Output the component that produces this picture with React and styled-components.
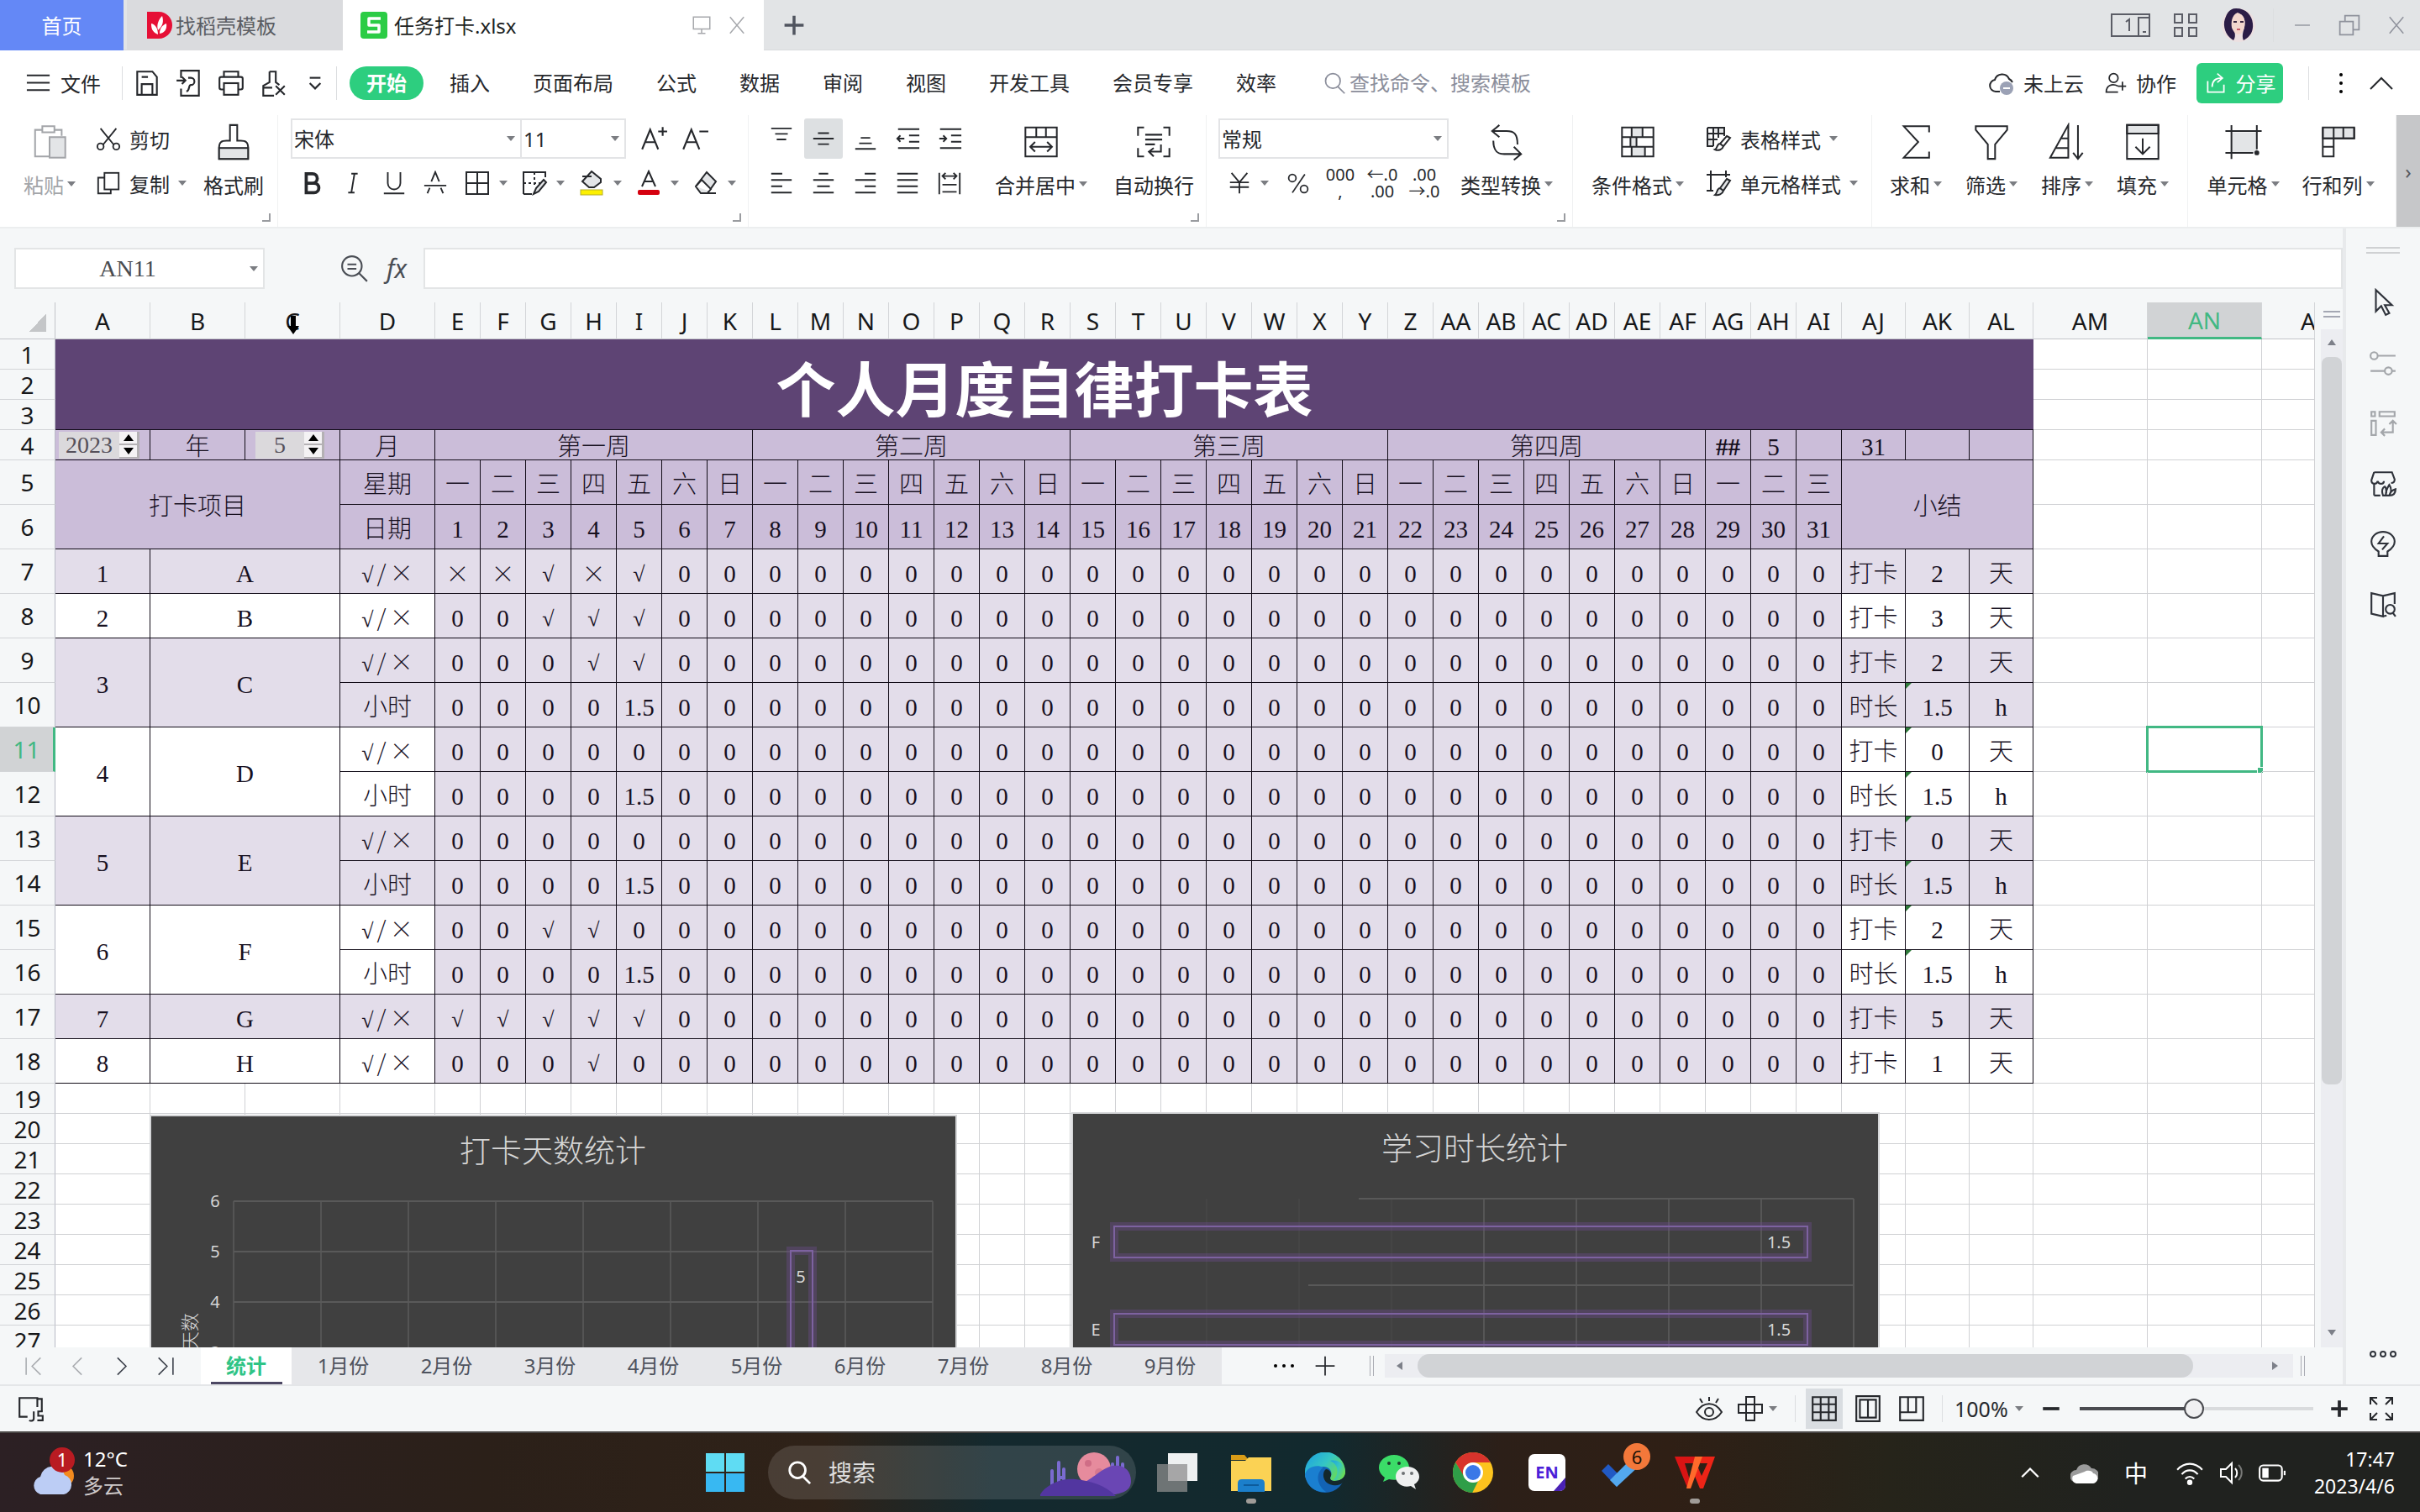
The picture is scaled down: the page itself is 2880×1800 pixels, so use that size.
import React from 'react';
import styled, { createGlobalStyle, css } from 'styled-components';

const UI_FONT = `"Noto Sans", "Noto Sans CJK SC", sans-serif`;
const CELL_FONT = `"Liberation Serif", "Noto Sans CJK SC", serif`;
const CJK_FONT = `"Noto Sans CJK SC", sans-serif`;

const GlobalStyle = createGlobalStyle`
  * {
    box-sizing: border-box;
  }
  body {
    margin: 0;
    font-family: ${UI_FONT};
    font-size: 24px;
    color: #26282c;
    background-color: #f5f7f8;
  }
  button, input, select {
    font: inherit;
    color: inherit;
    margin: 0;
    padding: 0;
    border: 0;
    background: none;
    outline: none;
  }
`;

/* ---------- icons ---------- */

const shade = { fill: '#e3e5e7' };

const ICONS = {
  save: <><path d="M5 3h17l5 6v20H5z" /><path d="M10 29V17h12v12M10 9h7" /></>,
  exportFile: <><path d="M7 10V2h20v28H7v-8" /><path d="M2 13h9M8 9l4 4-4 4" /><path d="M15 10h3a4 4 0 0 1 0 8c-3 0-1 7-5 7" /></>,
  print: <><path d="M8 9V3h16v6" /><rect x="3" y="9" width="26" height="14" rx="2" /><rect x="8" y="16" width="16" height="13" fill="#fff" /></>,
  preview: <><path d="M12 3h7v12l4 3M12 3v12l-7 4v11h12" /><path d="M19 19l10 10M29 19L19 29M5 21h10" /></>,
  more: <><path d="M10 10h12" /><path d="M10 16l6 6 6-6" /></>,
  menu: <path d="M2 7h28M2 16h28M2 25h28" />,
  search: <><circle cx="14" cy="13" r="10" /><path d="M21 21l9 9" /></>,
  cloud: <><path d="M14 26H9a7 7 0 0 1-1-13.900A9 9 0 0 1 25 11c2 1 3 2 4 4" /><circle cx="22" cy="22" r="8" fill="#9ba1b5" stroke="none" /><path d="M18 22h8" stroke="#fff" /></>,
  collab: <><circle cx="13" cy="9" r="6" /><path d="M19 20c-8-4-16-1-16 8h16M25 14v12M19 20h11" /></>,
  share: <><path d="M5 13v15h22V18" /><path d="M11 21c0-8 4-12 13-12M18 3l7 6-7 6" /></>,
  paste: <><path d="M10 6H4v22h12M20 6h6v5" /><path d="M10 3h10v5H10z" /><rect x="16" y="12" width="13" height="17" {...shade} /></>,
  cut: <><path d="M6 3l17 21M26 3L9 24" /><circle cx="6" cy="26" r="4" /><circle cx="26" cy="26" r="4" /></>,
  copy: <><path d="M11 9H3v20h16v-5" /><rect x="11" y="3" width="18" height="21" /></>,
  brush: <><path d="M13 2h6v13h3c4 0 6 1 6 6v9H4v-9c0-5 2-6 6-6h3z" /><rect x="4" y="21" width="24" height="9" {...shade} /></>,
  fontUp: <><path d="M3 28L12 6l9 22M6 20h12M26 3v10M21 8h10" /></>,
  fontDown: <><path d="M3 28L12 6l9 22M6 20h12M21 8h10" /></>,
  bold: <path strokeWidth="4" d="M9 4h8a6 6 0 0 1 0 12H9zM9 16h10a6 6 0 0 1 0 12H9z" />,
  italic: <path d="M14 4h8M10 28h8M18 4l-4 24" />,
  underline: <path d="M8 2v14a8 8 0 0 0 16 0V2M3 29h26" />,
  strike: <path d="M2 19h28M11 14l5-12 5 12M9 22l-3 7M23 22l3 7" />,
  border: <path d="M3 3h26v26H3zM3 16h26M16 3v26" />,
  cellStyle: <><path d="M3 29V3h26v6M3 29h10" /><path strokeDasharray="3 3" d="M3 16h20M16 3v18" /><path d="M15 29l3-7 9-10 3 3-9 11z" {...shade} /></>,
  fill: <><path d="M16 2L27 11v4l-8 6h-6l-8-7z" {...shade} /><path d="M5 8h11" /><rect x="3" y="24" width="26" height="6" fill="#fdf000" stroke="#b4ad2a" strokeWidth="1" /></>,
  fontColor: <><path d="M8 20l8-18 8 18M10 14h12" /><rect x="3" y="24" width="26" height="6" rx="2" fill="#d5000f" stroke="none" /></>,
  eraser: <><path d="M17 3l11 11-10 14h-8L4 20z" {...shade} /><path d="M4 20l7-8 11 11-4 5h9M10 28h18" fill="#fff" /></>,
  alignTop: <path d="M3 3h26M8 10h16M10 17h12" />,
  alignMid: <path d="M3 16h26M9 9h14M9 23h14" />,
  alignBottom: <path d="M3 29h26M10 15h12M8 22h16" />,
  outdent: <path d="M4 4h27M18 12h13M18 20h13M4 28h27M3 16h9M7 12l-4 4 4 4" />,
  indent: <path d="M4 4h27M18 12h13M18 20h13M4 28h27M3 16h9M8 12l4 4-4 4" />,
  left: <path d="M3 4h14M3 12h26M3 20h14M3 28h26" />,
  center: <path d="M10 4h12M3 12h26M8 20h16M3 28h26" />,
  right: <path d="M15 4h14M3 12h26M15 20h14M3 28h26" />,
  justify: <path d="M3 4h26M3 12h26M3 20h26M3 28h26" />,
  distribute: <path d="M3 3v27M29 3v27M7 7h18M11 3L7 7l4 4M21 3l4 4-4 4M7 18h18M7 27h18" />,
  merge: <><path d="M3 4h26v24H3zM3 12h26M12 4v8M20 4v8" /><path d="M8 20h16M11 16l-4 4 4 4M21 16l4 4-4 4" /></>,
  wrap: <><path d="M8 4H3v7M24 4h5v7M8 28H3v-7M24 28h5v-7" /><path d="M9 10h14M9 14h14M9 18h8M22 18v6h-9M16 21l-4 3 4 4" /></>,
  yen: <path d="M6 3l10 12L26 3M4 15h24M4 21h24M16 15v14" />,
  percent: <><circle cx="8" cy="9" r="5" /><circle cx="24" cy="24" r="5" /><path d="M25 4L8 29" /></>,
  convert: <><path d="M10 2L4 7l6 5M4 7h12c6 0 9 2 9 11" /><path d="M22 20l6 6-6 5M28 26H14c-6 0-9-3-9-11" /></>,
  condFormat: <><path d="M11 4h9v8h-9zM10 12h5v8h-5zM11 20h11v8H11z" {...shade} stroke="none" /><path d="M3 4h26v24H3zM3 12h26M3 20h26M11 4v8M20 4v8M10 12v8M15 12v8M11 20v8M22 20v8" /></>,
  tableStyle: <><path d="M3 3h20v10M3 3v22h7M3 10h20M3 17h12M10 3v22M16 3v12" {...shade} /><path d="M26 13l4 2-8 10-4-3zM18 22c-4 0-3 6-6 7 4 2 9 0 10-4" fill="#fff" /></>,
  cellFormat: <><path d="M7 1v24M2 6h28M25 1v8M2 25h8" /><path d="M26 11l4 2-8 12-4-3zM18 22c-4 0-3 6-6 8 4 1 9-1 10-5" {...shade} /></>,
  sum: <path d="M27 8V3H6l12 13L6 29h21v-5" />,
  filter: <path d="M3 3h26v3L19 18v12h-6V18L3 6z" />,
  sort: <path d="M17 2v27H2zM17 13h-6M17 21H7M25 2v27M21 25l4 5 4-5" />,
  fillDown: <><path d="M3 2h26v7H3z" {...shade} /><path d="M3 2h26v28H3zM16 13v12M10 20l6 6 6-6" /></>,
  cell: <><rect x="6" y="8" width="21" height="17" {...shade} stroke="none" /><path d="M6 2v28M1 7h30M1 25h23M27 2v20" /><circle cx="27" cy="25" r="2" fill="currentColor" stroke="none" /></>,
  rowCol: <><path d="M3 4h26v9H3z" {...shade} /><path d="M3 4v24h9V4M3 13h26V4M3 20h9M20 4v9" /></>,
  lookup: <><circle cx="13" cy="13" r="11" /><path d="M21 21l9 9M8 11h10M8 16h10" /></>,
  screen: <path d="M3 3h26v19H3zM16 22v7M10 29h12" />,
  close: <path d="M5 3l22 26M27 3L5 29" />,
  plus: <path d="M16 3v26M3 16h26" />,
  minus: <path d="M3 16h26" />,
  apps: <path d="M3 3h9v10H3zM20 3h9v10h-9zM3 19h9v10H3zM20 19h9v10h-9z" />,
  restore: <path d="M3 11h18v18H3zM10 11V3h19v19h-8" />,
  chevronUp: <path d="M3 23l13-13 13 13" />,
  chevronLeft: <path d="M22 3L9 16l13 13" />,
  chevronRight: <path d="M10 3l13 13-13 13" />,
  first: <path d="M4 3v26M26 3L13 16l13 13" />,
  last: <path d="M28 3v26M6 3l13 13L6 29" />,
  pointer: <path d="M8 2v24l6-6 5 10 4-2-5-9h8z" />,
  sliders: <><circle cx="6" cy="8" r="4" /><path d="M10 8h20M2 25h16M26 25h4" /><circle cx="22" cy="25" r="4" /></>,
  swap: <path d="M3 3h4v5H3zM12 3h17v5H12zM3 13h5v16H3zM27 13v13H14M23 17l4-4 4 4M18 22l-4 4 4 4" />,
  shop: <><path d="M6 29V16M6 3h20l3 8c0 3-2 4-4 4M6 3l-3 9c0 5 6 5 7 1 1 4 7 4 7 0M6 29h7" /><path d="M16 29c-3-8 2-10 2-10s3 3 1 10c0-6 2-9 4-12 3 4 2 9 0 12 1-4 3-6 7-7 0 5-3 7-7 7z" /></>,
  bulb: <><path d="M11 29h10v-5c5-3 8-6 8-11a13 11 0 0 0-26 0c0 5 3 8 8 11z" /><path d="M17 7l-6 8h10l-6 7" /></>,
  book: <><path d="M16 6L3 3v23l13 3zM16 6l13-3v12M16 29l4-1" /><circle cx="24" cy="21" r="5" /><path d="M27 25l3 4" /></>,
  dots: <><circle cx="4" cy="16" r="3" /><circle cx="16" cy="16" r="3" /><circle cx="28" cy="16" r="3" /></>,
  eye: <><path d="M1 20c8-13 22-13 30 0-8 12-22 12-30 0z" /><circle cx="16" cy="20" r="5" /><path d="M16 2v5M5 4l3 5M27 4l-3 5" /></>,
  cross: <path d="M11 2h10v28H11zM2 11h28v10H2z" />,
  gridView: <path d="M3 3h26v26H3zM3 11h26M3 20h26M12 3v26M21 3v26" />,
  pageView: <path d="M3 2h26v28H3zM7 6h18v20H7zM16 6v20" />,
  splitView: <path d="M3 3h26v26H3zM3 20h18V3M12 3v17" />,
  fullscreen: <path d="M3 11V3h8M3 3l8 8M29 11V3h-8M29 3l-8 8M3 21v8h8M3 29l8-8M29 21v8h-8M29 29l-8-8" />,
  macro: <><path d="M12 25H3V4h20v10M23 5h5v14" /><path d="M19 19v8c0 3-4 3-5 2M29 19h-5v5h5v5h-6" /></>,
  wifi: <><path d="M2 13c8-9 20-9 28 0M7 18c5-6 13-6 18 0M11 23c3-3 7-3 10 0" /><circle cx="16" cy="27" r="2" fill="currentColor" /></>,
  sound: <><path d="M3 12h6l7-7v23l-7-7H3zM20 11c3 3 3 8 0 11" /><path d="M24 7c5 5 5 13 0 18" opacity=".4" /></>,
  battery: <><rect x="2" y="8" width="25" height="17" rx="4" /><rect x="5" y="11" width="7" height="11" fill="currentColor" stroke="none" /><path d="M30 14v5" /></>,
};

const Svg = styled.svg`
  display: block;
  flex: none;
  fill: none;
  stroke: currentColor;
  stroke-width: ${(p) => p.$stroke || 2};
`;

const Icon = ({ name, size = 30, stroke }) => (
  <Svg $stroke={stroke} width={size} height={size} viewBox="0 0 32 32" aria-hidden="true">
    {ICONS[name]}
  </Svg>
);

const Arrow = styled.span`
  flex: none;
  width: 10px;
  height: 6px;
  border: 5px solid transparent;
  border-top: 6px solid #7b7d82;
  border-bottom: 0;
`;

const Rule = styled.span`
  flex: none;
  width: 1px;
  height: ${(p) => p.$h || 40}px;
  margin: 0 ${(p) => p.$gap || 0}px;
  background-color: #dcdee0;
`;

/* ---------- shell ---------- */

const Page = styled.div`
  height: 100vh;
  display: flex;
  flex-direction: column;
  overflow: hidden;
`;

const TitleBar = styled.header`
  flex: none;
  height: 60px;
  display: flex;
  align-items: center;
  background-color: #e2e4e6;
  border-bottom: 1px solid #d8dadc;
`;

const HomeTab = styled.button`
  width: 147px;
  height: 60px;
  color: #fff;
  background-color: #6488f6;
`;

const DocTab = styled.button`
  display: flex;
  align-items: center;
  gap: ${(p) => (p.$active ? 8 : 4)}px;
  width: ${(p) => (p.$active ? 501 : 257)}px;
  height: 60px;
  margin-left: ${(p) => (p.$active ? 0 : 4)}px;
  padding: 0 20px 0 ${(p) => (p.$active ? 21 : 24)}px;
  color: ${(p) => (p.$active ? '#1d1f22' : '#5a5d63')};
  background-color: ${(p) => (p.$active ? '#fff' : '#dadbde')};
`;

const TabIcons = styled.span`
  display: flex;
  gap: 18px;
  margin-left: auto;
  color: #a6a8ac;
`;

const TitleTools = styled.div`
  display: flex;
  align-items: center;
  margin-left: auto;
  color: #5b5d66;
`;

const TitleTool = styled.button`
  display: flex;
  justify-content: center;
  align-items: center;
  width: ${(p) => p.$w || 56}px;
  height: 60px;
  color: ${(p) => (p.$dim ? '#8f929c' : 'inherit')};
`;

const AddTab = styled(TitleTool)`
  width: 72px;
  color: #50545f;
`;

const MenuBar = styled.nav`
  flex: none;
  height: 77px;
  display: flex;
  align-items: center;
  padding: 0 30px;
  background-color: #fff;
`;

const FileButton = styled.button`
  display: flex;
  align-items: center;
  gap: 11px;
  width: 111px;
`;

const QuickButton = styled.button`
  display: flex;
  justify-content: center;
  width: 50px;
`;

const MenuItems = styled.div`
  display: flex;
  align-items: center;
  gap: 11px;
  margin-left: 15px;
`;

const MenuItem = styled.button`
  height: 40px;
  padding: 0 20px;
  line-height: 38px;
  border-radius: 20px;
  white-space: nowrap;
  ${(p) => p.$active && css`
    color: #fff;
    font-weight: 700;
    background-color: #2dce7f;
  `}
`;

const SearchBox = styled.label`
  display: flex;
  align-items: center;
  gap: 4px;
  margin-left: 35px;
  color: #8b8e9b;
  input {
    width: 260px;
  }
  input::placeholder {
    color: #8b8e9b;
    opacity: 1;
  }
`;

const MenuRight = styled.div`
  display: flex;
  align-items: center;
  gap: 24px;
  margin-left: auto;
`;

const TextButton = styled.button`
  display: flex;
  align-items: center;
  gap: 10px;
  white-space: nowrap;
`;

const ShareButton = styled(TextButton)`
  height: 48px;
  width: 103px;
  justify-content: center;
  color: #fff;
  border-radius: 6px;
  background-color: #2dce7f;
`;

/* ---------- ribbon ---------- */

const Ribbon = styled.section`
  flex: none;
  height: 135px;
  display: flex;
  background-color: #fff;
  border-bottom: 2px solid #eceeef;
`;

const Group = styled.div`
  position: relative;
  flex: ${(p) => (p.$w ? 'none' : '1')};
  width: ${(p) => (p.$w ? `${p.$w}px` : 'auto')};
  display: flex;
  padding: 4px 0 0 ${(p) => p.$pad}px;
  border-right: 1px solid #f0f1f2;
`;

const Launcher = styled.button`
  position: absolute;
  right: 8px;
  bottom: 6px;
  width: 10px;
  height: 10px;
  border-right: 2px solid #9a9ca0;
  border-bottom: 2px solid #9a9ca0;
`;

const BigButtonRoot = styled.button`
  width: ${(p) => p.$w}px;
  height: 100px;
  display: flex;
  flex-direction: column;
  align-items: center;
  color: ${(p) => (p.$muted ? '#a3a5a9' : 'inherit')};
`;

const BigIcon = styled.span`
  height: 56px;
  display: flex;
  align-items: center;
`;

const BigLabel = styled.span`
  height: 44px;
  display: flex;
  align-items: center;
  gap: 4px;
  white-space: nowrap;
`;

const BigButton = ({ icon, label, w, muted, arrow = true }) => (
  <BigButtonRoot $w={w} $muted={muted}>
    <BigIcon><Icon name={icon} size={46} stroke={1.4} /></BigIcon>
    <BigLabel>{label}{arrow && <Arrow />}</BigLabel>
  </BigButtonRoot>
);

const Stack = styled.div`
  display: flex;
  flex-direction: column;
  gap: 5px;
  width: ${(p) => (p.$w ? `${p.$w}px` : 'auto')};
  padding-left: ${(p) => p.$pad || 0}px;
`;

const Line = styled.div`
  display: flex;
  align-items: center;
  height: 48px;
  gap: ${(p) => p.$gap || 0}px;
`;

const FontPickers = styled.div`
  display: flex;
  margin-right: 8px;
`;

const LineButton = styled(TextButton)`
  height: 48px;
`;

const ToolButton = styled.button`
  display: flex;
  align-items: center;
  justify-content: ${(p) => (p.$arrow ? 'flex-start' : 'center')};
  gap: 10px;
  width: ${(p) => p.$w || 49}px;
  height: 48px;
  padding-left: ${(p) => (p.$arrow ? 10 : 0)}px;
  font-size: 20px;
  line-height: 20px;
  border-radius: 3px;
  background-color: ${(p) => (p.$active ? '#dde0e2' : 'transparent')};
`;

const SelectWrap = styled.span`
  display: flex;
  align-items: center;
  width: ${(p) => p.$w}px;
  height: 48px;
  padding: 0 6px 0 2px;
  border: 2px solid #e3e4e6;
  & + & {
    border-left: 0;
  }
  select {
    flex: 1;
    min-width: 0;
    appearance: none;
  }
`;

const Select = ({ w, label, value }) => (
  <SelectWrap $w={w}>
    <select aria-label={label} defaultValue={value}><option>{value}</option></select>
    <Arrow />
  </SelectWrap>
);

const RibbonScroll = styled.button`
  width: 28px;
  height: 133px;
  color: #55575c;
  background-color: #c6c7c9;
`;

/* ---------- formula bar ---------- */

const Main = styled.main`
  flex: 1;
  min-height: 0;
  display: flex;
`;

const Work = styled.div`
  flex: 1;
  min-width: 0;
  display: flex;
  flex-direction: column;
`;

const FormulaBar = styled.div`
  flex: none;
  height: 88px;
  display: flex;
  align-items: flex-start;
  padding: 23px 0 0 17px;
`;

const NameBox = styled.div`
  display: flex;
  align-items: center;
  width: 298px;
  height: 49px;
  padding-right: 6px;
  background-color: #fff;
  border: 2px solid #e3e5e6;
  input {
    flex: 1;
    min-width: 0;
    padding-right: 12px;
    text-align: center;
    font-family: ${CELL_FONT};
    font-size: 28px;
    color: #4a4c50;
  }
`;

const FormulaIcons = styled.div`
  display: flex;
  align-items: center;
  gap: 21px;
  height: 49px;
  margin-left: 90px;
  color: #4a4e55;
`;

const Fx = styled.span`
  font-size: 30px;
  font-style: italic;
  line-height: 49px;
`;

const FormulaInput = styled.input`
  flex: 1;
  height: 49px;
  margin-left: 20px;
  padding: 0 8px;
  background-color: #fff;
  border: 2px solid #e3e5e6;
`;

/* ---------- sheet ---------- */

const SheetRow = styled.div`
  flex: 1;
  min-height: 0;
  display: flex;
`;

const SheetView = styled.div`
  position: relative;
  flex: 1;
  min-width: 0;
  overflow: hidden;
`;

const Table = styled.table`
  width: 100%;
  table-layout: fixed;
  border-collapse: separate;
  border-spacing: 0;
  font-family: ${CELL_FONT};
  font-size: 29px;
  font-weight: 300;
  line-height: 30px;
  text-align: center;
  background-color: #fff;
`;

const Col = styled.col`
  width: ${(p) => (p.$w ? `${p.$w}px` : 'auto')};
`;

const Tr = styled.tr`
  height: ${(p) => p.$h}px;
`;

const headText = css`
  padding: 0;
  overflow: hidden;
  font-family: ${UI_FONT};
  font-size: 28px;
  font-weight: 400;
  color: ${(p) => (p.$selected ? '#41b883' : '#17181a')};
  background-color: ${(p) => (p.$selected ? '#d1d3d5' : '#f5f7f8')};
`;

const ColHead = styled.th`
  ${headText}
  position: relative;
  border-right: 1px solid #d3d5d8;
  border-bottom: ${(p) => (p.$selected ? '3px solid #41b883' : '1px solid #c3c5ca')};
  text-align: ${(p) => (p.$clipped ? 'left' : 'center')};
  padding-left: ${(p) => (p.$clipped ? 46 : 0)}px;
`;

const RowHead = styled.th`
  ${headText}
  border-right: ${(p) => (p.$selected ? '3px solid #41b883' : '1px solid #b9bbc6')};
  border-bottom: 1px solid #d3d5d8;
`;

const Corner = styled.th`
  background-color: #f5f7f8;
  border-bottom: 1px solid #c3c5ca;
  border-right: 1px solid #c3c5ca;
  padding: 0 10px 8px 0;
  vertical-align: bottom;
  &::after {
    content: '';
    display: block;
    margin-left: auto;
    width: 20px;
    height: 22px;
    background: linear-gradient(to bottom right, transparent 50%, #c4c6c8 50%);
  }
`;

const tones = { head: '#cbbdd9', light: '#e3ddea', white: '#fff' };

const Cell = styled.td`
  position: relative;
  padding: ${(p) => (p.$flush ? 0 : 5)}px 0 0;
  white-space: nowrap;
  color: #17101f;
  font-weight: ${(p) => (p.$bold ? 700 : 300)};
  background-color: ${(p) => tones[p.$tone]};
  border-right: 1px solid #120c18;
  border-bottom: 1px solid #120c18;
  ${(p) => p.$flag && css`
    &::before {
      content: '';
      position: absolute;
      left: 0;
      top: 0;
      border-top: 7px solid #2f7a3a;
      border-right: 7px solid transparent;
    }
  `}
`;

const Mark = styled.span`
  display: inline-block;
  padding: 0 2px;
  font-family: ${(p) => (p.$tick ? '"DejaVu Sans"' : CJK_FONT)};
  font-size: ${(p) => (p.$tick ? 26 : 28)}px;
`;

const TitleCell = styled.td`
  padding: 2px 0 0;
  font-family: ${CJK_FONT};
  font-size: 71px;
  font-weight: 700;
  line-height: 80px;
  color: #fff;
  background-color: #5e4474;
  border-bottom: 1px solid #120c18;
`;

const Blank = styled.td`
  position: relative;
  padding: 0;
  border-right: 1px solid #d0d1d4;
  border-bottom: 1px solid #d0d1d4;
`;

const Selection = styled.span`
  position: absolute;
  inset: -2px;
  border: 3px solid #41b883;
  &::after {
    content: '';
    position: absolute;
    right: -4px;
    bottom: -4px;
    width: 6px;
    height: 6px;
    background-color: #41b883;
    border: 1px solid #fff;
  }
`;

const ColumnCursor = styled.svg`
  position: absolute;
  left: 50px;
  top: 16px;
`;

const Spinner = styled.div`
  display: flex;
  align-items: center;
  height: 32px;
  width: ${(p) => p.$w}px;
  margin-left: ${(p) => p.$left}px;
  background-color: #dbd9dc;
  input {
    flex: 1;
    min-width: 0;
    text-align: center;
    font-size: 28px;
    color: #55505a;
  }
`;

const SpinButtons = styled.span`
  display: flex;
  flex-direction: column;
  width: 24px;
  button {
    height: 16px;
    display: flex;
    align-items: center;
    justify-content: center;
    background-color: #f4f2f4;
    border-right: 3px solid #b4b1b4;
    border-bottom: 2px solid #b4b1b4;
  }
`;

const DateSpinner = ({ value, label, left, w }) => (
  <Spinner $left={left} $w={w}>
    <input aria-label={label} defaultValue={value} />
    <SpinButtons>
      <button aria-label={`${label}+`}><svg width="12" height="8"><path d="M6 0l6 8H0z" /></svg></button>
      <button aria-label={`${label}-`}><svg width="12" height="8"><path d="M6 8l6-8H0z" /></svg></button>
    </SpinButtons>
  </Spinner>
);

const letters = 'ABCDEFGHIJKLMNOPQRSTUVWXYZ'.split('');
const columns = [...letters, ...letters.slice(0, 15).map((l) => `A${l}`)];
const colWidth = (i) => {
  if (i < 4) return 113;
  if (i < 35) return 54;
  if (i < 38) return 76;
  return i < 40 ? 136 : 0;
};

const days = Array.from({ length: 31 }, (_, i) => i + 1);
const weekdays = ['一', '二', '三', '四', '五', '六', '日'];

// first: the leading values of the row, every later day is 0
const rows = [
  { no: 1, name: 'A', tone: 'light', kind: '√/×', first: ['×', '×', '√', '×', '√'], sum: ['打卡', '2', '天'] },
  { no: 2, name: 'B', tone: 'white', kind: '√/×', first: [0, 0, '√', '√', '√'], sum: ['打卡', '3', '天'] },
  { no: 3, name: 'C', span: 2, tone: 'light', kind: '√/×', first: [0, 0, 0, '√', '√'], sum: ['打卡', '2', '天'] },
  { tone: 'light', kind: '小时', first: [0, 0, 0, 0, 1.5], sum: ['时长', '1.5', 'h'], flag: true },
  { no: 4, name: 'D', span: 2, tone: 'white', kind: '√/×', first: [], sum: ['打卡', '0', '天'], flag: true },
  { tone: 'white', kind: '小时', first: [0, 0, 0, 0, 1.5], sum: ['时长', '1.5', 'h'], flag: true },
  { no: 5, name: 'E', span: 2, tone: 'light', kind: '√/×', first: [], sum: ['打卡', '0', '天'], flag: true },
  { tone: 'light', kind: '小时', first: [0, 0, 0, 0, 1.5], sum: ['时长', '1.5', 'h'], flag: true },
  { no: 6, name: 'F', span: 2, tone: 'white', kind: '√/×', first: [0, 0, '√', '√'], sum: ['打卡', '2', '天'], flag: true },
  { tone: 'white', kind: '小时', first: [0, 0, 0, 0, 1.5], sum: ['时长', '1.5', 'h'], flag: true },
  { no: 7, name: 'G', tone: 'light', kind: '√/×', first: ['√', '√', '√', '√', '√'], sum: ['打卡', '5', '天'] },
  { no: 8, name: 'H', tone: 'white', kind: '√/×', first: [0, 0, 0, '√'], sum: ['打卡', '1', '天'] },
];

const CellText = ({ value }) => {
  if (!/[√×]/.test(value)) return value;
  return value.split('').map((c) => <Mark key={c} $tick={c === '√'}>{c}</Mark>);
};

const Tail = ({ selected }) => (
  <>
    <Blank />
    <Blank>{selected && <Selection />}</Blank>
    <Blank />
  </>
);

const Sheet = () => (
  <Table>
    <colgroup>
      <Col $w={66} />
      {columns.map((c, i) => <Col key={c} $w={colWidth(i)} />)}
    </colgroup>
    <thead>
      <Tr $h={44}>
        <Corner />
        {columns.map((c) => (
          <ColHead key={c} scope="col" $selected={c === 'AN'} $clipped={c === 'AO'}>
            {c}
            {c === 'C' && (
              <ColumnCursor width="14" height="22" viewBox="0 0 14 22">
                <path d="M4 0h6v12h4l-7 10-7-10h4z" />
              </ColumnCursor>
            )}
          </ColHead>
        ))}
      </Tr>
    </thead>
    <tbody>
      <Tr $h={36}>
        <RowHead scope="row">1</RowHead>
        <TitleCell colSpan={38} rowSpan={3}>个人月度自律打卡表</TitleCell>
        <Tail />
      </Tr>
      <Tr $h={36}><RowHead scope="row">2</RowHead><Tail /></Tr>
      <Tr $h={36}><RowHead scope="row">3</RowHead><Tail /></Tr>
      <Tr $h={36}>
        <RowHead scope="row">4</RowHead>
        <Cell $tone="head" $flush><DateSpinner label="年" value="2023" left={4} w={96} /></Cell>
        <Cell $tone="head">年</Cell>
        <Cell $tone="head" $flush><DateSpinner label="月" value="5" left={12} w={82} /></Cell>
        <Cell $tone="head">月</Cell>
        {['第一周', '第二周', '第三周', '第四周'].map((w) => <Cell key={w} $tone="head" colSpan={7}>{w}</Cell>)}
        <Cell $tone="head" $bold>##</Cell>
        <Cell $tone="head">5</Cell>
        <Cell $tone="head" />
        <Cell $tone="head">31</Cell>
        <Cell $tone="head" />
        <Cell $tone="head" />
        <Tail />
      </Tr>
      <Tr $h={53}>
        <RowHead scope="row">5</RowHead>
        <Cell $tone="head" colSpan={3} rowSpan={2}>打卡项目</Cell>
        <Cell $tone="head">星期</Cell>
        {days.map((d) => <Cell key={d} $tone="head">{weekdays[(d - 1) % 7]}</Cell>)}
        <Cell $tone="head" colSpan={3} rowSpan={2}>小结</Cell>
        <Tail />
      </Tr>
      <Tr $h={53}>
        <RowHead scope="row">6</RowHead>
        <Cell $tone="head">日期</Cell>
        {days.map((d) => <Cell key={d} $tone="head">{d}</Cell>)}
        <Tail />
      </Tr>
      {rows.map((row, i) => (
        <Tr key={i} $h={53}>
          <RowHead scope="row" $selected={i === 4}>{i + 7}</RowHead>
          {row.no && <Cell $tone={row.tone} rowSpan={row.span || 1}>{row.no}</Cell>}
          {row.no && <Cell $tone={row.tone} colSpan={2} rowSpan={row.span || 1}>{row.name}</Cell>}
          <Cell $tone={row.tone}><CellText value={row.kind} /></Cell>
          {days.map((d) => (
            <Cell key={d} $tone="light"><CellText value={row.first[d - 1] || 0} /></Cell>
          ))}
          {row.sum.map((s, n) => <Cell key={s} $tone={row.tone} $flag={n === 1 && row.flag}>{s}</Cell>)}
          <Tail selected={i === 4} />
        </Tr>
      ))}
      {Array.from({ length: 9 }, (_, i) => (
        <Tr key={i} $h={36}>
          <RowHead scope="row">{i + 19}</RowHead>
          {columns.map((c) => <Blank key={c} />)}
        </Tr>
      ))}
    </tbody>
  </Table>
);

/* ---------- charts ---------- */

const ChartBox = styled.svg`
  position: absolute;
  left: ${(p) => p.$left}px;
  top: ${(p) => p.$top}px;
  display: block;
  background-color: #404040;
  box-shadow: 0 0 0 2px #d5d6d8;
  text {
    fill: #d6d6d6;
    font-family: ${UI_FONT};
    font-size: 20px;
    text-anchor: middle;
  }
  .title {
    font-family: ${CJK_FONT};
    font-size: 37px;
    font-weight: 300;
  }
  .axis {
    font-size: 22px;
    font-weight: 300;
  }
  .grid {
    stroke: #595959;
    stroke-width: 2;
    fill: none;
  }
  .glow {
    stroke: #6b4a8c;
    stroke-opacity: 0.4;
    stroke-width: 10;
    fill: none;
  }
  .bar {
    stroke: #7d62a0;
    stroke-width: 2;
    fill: none;
  }
`;

const DaysChart = () => (
  <ChartBox $left={180} $top={969} width="957" height="460" viewBox="0 0 957 460">
    <text className="title" x="478" y="55">打卡天数统计</text>
    {[101, 161, 221, 281, 341, 401].map((y, i) => (
      <React.Fragment key={y}>
        <path className="grid" d={`M98 ${y}h832`} />
        <text x="76" y={y + 7}>{6 - i}</text>
      </React.Fragment>
    ))}
    {[0, 1, 2, 3, 4, 5, 6, 7, 8].map((n) => <path key={n} className="grid" strokeOpacity=".8" d={`M${98 + n * 104} 101v340`} />)}
    <rect className="glow" x="761" y="160" width="26" height="290" />
    <rect className="bar" x="761" y="160" width="26" height="290" />
    <text x="773" y="198">5</text>
    <text className="axis" transform="translate(54 256) rotate(-90)">天数</text>
  </ChartBox>
);

const HoursChart = () => (
  <ChartBox $left={1277} $top={966} width="958" height="460" viewBox="0 0 958 460">
    <text className="title" x="478" y="55">学习时长统计</text>
    <path className="grid" d="M340 101h589M280 204h649M929 101v350" />
    {[1, 2, 3, 4, 5, 6, 7].map((n) => <path key={n} className="grid" strokeOpacity={n > 3 ? 0.9 : 0.2} d={`M${49 + n * 110} 101v350`} />)}
    {['F', 'E', 'C'].map((name, i) => (
      <React.Fragment key={name}>
        <rect className="glow" x="49" y={134 + i * 104} width="825" height="37" />
        <rect className="bar" x="49" y={134 + i * 104} width="825" height="37" />
        <text x="27" y={160 + i * 104}>{name}</text>
        <text x="840" y={160 + i * 104}>1.5</text>
      </React.Fragment>
    ))}
  </ChartBox>
);

/* ---------- scroll bars, sheet tabs, status ---------- */

const VScroll = styled.div`
  width: 33px;
  display: flex;
  flex-direction: column;
  align-items: center;
  padding: 6px 0 0 6px;
`;

const SplitGrip = styled.span`
  width: 20px;
  height: 8px;
  margin: 4px 0 14px;
  border: 2px solid #a4a7b3;
  border-width: 2px 0;
`;

const VTrack = styled.div`
  flex: 1;
  width: 26px;
  display: flex;
  flex-direction: column;
  align-items: center;
  padding: 12px 0 14px;
  background-color: #ecedf1;
`;

const VThumb = styled.div`
  flex: 0 0 73%;
  width: 24px;
  margin: 14px 0 auto;
  border-radius: 8px;
  background-color: #d1d3d6;
`;

const Triangle = styled.span`
  width: 0;
  height: 0;
  border: 5px solid transparent;
  ${(p) => p.$dir === 'up' && 'border-top: 0; border-bottom: 7px solid #7d8089;'}
  ${(p) => p.$dir === 'down' && 'border-bottom: 0; border-top: 7px solid #7d8089;'}
  ${(p) => p.$dir === 'left' && 'border-left: 0; border-right: 7px solid #7d8089;'}
  ${(p) => p.$dir === 'right' && 'border-right: 0; border-left: 7px solid #7d8089;'}
`;

const TabStrip = styled.div`
  flex: none;
  height: 44px;
  display: flex;
  align-items: center;
`;

const NavButton = styled.button`
  display: flex;
  justify-content: center;
  width: 52px;
  color: ${(p) => (p.disabled ? '#a9acb0' : '#3a3f49')};
`;

const SheetNav = styled.div`
  display: flex;
  width: 239px;
  padding-left: 14px;
`;

const SheetTab = styled.button`
  width: ${(p) => (p.$active ? 108 : 123)}px;
  height: 44px;
  line-height: 42px;
  color: ${(p) => (p.$active ? '#2fc486' : '#4e535e')};
  font-weight: ${(p) => (p.$active ? 700 : 400)};
  background-color: ${(p) => (p.$active ? '#fff' : '#e6e7ea')};
  ${(p) => p.$active && css`
    background-image: linear-gradient(#4c4763, #4c4763);
    background-repeat: no-repeat;
    background-position: center bottom;
    background-size: 85px 3px;
  `}
`;

const StripButton = styled.button`
  display: flex;
  align-items: center;
  justify-content: center;
  width: ${(p) => p.$w}px;
  height: 44px;
`;

const StripSpace = styled.span`
  flex: none;
  width: ${(p) => p.$w}px;
`;

const DoubleRule = styled.span`
  width: 5px;
  height: 24px;
  border: 1px solid #a9abb3;
  border-width: 0 1px;
`;

const HScroll = styled.div`
  flex: 1;
  height: 28px;
  display: flex;
  align-items: center;
  gap: 18px;
  margin: 0 9px 0 13px;
  padding: 0 18px 0 14px;
  background-color: #ecedf1;
`;

const HThumb = styled.div`
  width: 88%;
  height: 28px;
  margin-right: auto;
  border-radius: 14px;
  background-color: #d1d3d6;
`;

const SideBar = styled.aside`
  flex: none;
  width: 92px;
  display: flex;
  flex-direction: column;
  align-items: center;
  padding: 22px 0 18px;
  border-left: 4px solid #e8eaec;
`;

const SideGrip = styled.span`
  width: 40px;
  height: 8px;
  margin-bottom: 40px;
  border: 2px solid #cfd1d3;
  border-width: 2px 0;
`;

const SideButton = styled.button`
  display: flex;
  align-items: center;
  justify-content: center;
  width: 60px;
  height: 36px;
  margin-bottom: 36px;
  color: ${(p) => (p.$dim ? '#a3a6aa' : '#2f333b')};
  &:last-child {
    margin: auto 0 0;
  }
`;

const StatusBar = styled.footer`
  flex: none;
  height: 56px;
  display: flex;
  align-items: center;
  padding: 0 18px 0 20px;
  border-top: 2px solid #e4e6e8;
`;

const StatusTools = styled.div`
  display: flex;
  align-items: center;
  margin-left: auto;
`;

const StatusButton = styled.button`
  display: flex;
  align-items: center;
  justify-content: center;
  gap: 6px;
  width: ${(p) => p.$w || 44}px;
  height: 48px;
  background-color: ${(p) => (p.$active ? '#d9dde1' : 'transparent')};
`;

const Views = styled.div`
  display: flex;
  gap: 8px;
`;

const ZoomSelect = styled.span`
  display: flex;
  align-items: center;
  width: 90px;
  gap: 4px;
  font-size: 25px;
  select {
    width: 68px;
    appearance: none;
  }
`;

const ZoomRange = styled.input`
  width: 278px;
  height: 24px;
  margin: 0 9px;
  appearance: none;
  &::-webkit-slider-runnable-track {
    height: 4px;
    background: linear-gradient(to right, #4a4b50 49%, #d9dbdd 49%);
  }
  &::-webkit-slider-thumb {
    appearance: none;
    width: 24px;
    height: 24px;
    margin-top: -10px;
    border: 2px solid #4a4b50;
    border-radius: 50%;
    background-color: #f0f0f1;
  }
`;

/* ---------- task bar ---------- */

const TaskBar = styled.footer`
  flex: none;
  height: 96px;
  display: flex;
  align-items: center;
  padding: 0 30px 0 36px;
  color: #fff;
  border-top: 2px solid #4a4746;
  background: linear-gradient(
    to right,
    #2c2024 0%, #2b2019 20%, #2f2218 34%, #14292e 41%, #12292e 55%,
    #2c1f18 62%, #2f1f15 69%, #26241a 78%, #20221f 88%
  );
`;

const Weather = styled.button`
  display: flex;
  align-items: center;
  gap: 10px;
  width: 782px;
  text-align: left;
  line-height: 32px;
  small {
    display: block;
    font-size: 24px;
    color: #cfcaca;
  }
`;

const TaskApps = styled.div`
  display: flex;
  align-items: center;
`;

const TaskApp = styled.button`
  position: relative;
  display: flex;
  align-items: center;
  justify-content: center;
  width: ${(p) => p.$w || 88}px;
  height: 94px;
  ${(p) => p.$running && css`
    &::after {
      content: '';
      position: absolute;
      bottom: 10px;
      width: 12px;
      height: 6px;
      border-radius: 3px;
      background-color: #a09c98;
    }
  `}
`;

const TaskSearch = styled.label`
  display: flex;
  align-items: center;
  gap: 20px;
  width: 438px;
  height: 64px;
  padding: 0 6px 0 22px;
  margin: 0 5px 0 6px;
  border-radius: 32px;
  background-color: rgba(255, 255, 255, 0.13);
  overflow: hidden;
  input {
    flex: 1;
    min-width: 0;
    font-size: 28px;
  }
  input::placeholder {
    color: #dedede;
    opacity: 1;
  }
`;

const Badge = styled.span`
  position: absolute;
  right: 9px;
  top: 12px;
  width: 32px;
  height: 32px;
  border-radius: 50%;
  font-size: 22px;
  line-height: 32px;
  text-align: center;
  color: #1c1208;
  background-color: #f3783a;
`;

const Tray = styled.div`
  display: flex;
  align-items: center;
  margin-left: auto;
`;

const TrayButton = styled.button`
  display: flex;
  justify-content: center;
  width: ${(p) => p.$w}px;
  font-size: 28px;
`;

const Clock = styled.time`
  width: 122px;
  text-align: right;
  font-size: 23px;
  line-height: 32px;
`;

const DocerLogo = () => (
  <svg width="30" height="32" viewBox="0 0 30 32">
    <path fill="#e60f36" d="M0 0h14a16 16 0 0 1 0 32H0z" />
    <path fill="#fff" d="M13 27C5 24 5 18 5 14c5 1 8 6 8 13zM13 22c-2-7 1-13 5-17 2 6 1 12-5 17zM15 26c0-6 3-10 8-12 1 7-2 11-8 12z" />
  </svg>
);

const SheetLogo = () => (
  <svg width="32" height="32" viewBox="0 0 32 32">
    <rect width="32" height="32" rx="4" fill="#2bcc45" />
    <path d="M24 8H10v8h12v8H8" fill="none" stroke="#fff" strokeWidth="3.500" strokeLinejoin="round" />
  </svg>
);

const Avatar = () => (
  <svg width="40" height="40" viewBox="0 0 40 40">
    <circle cx="20" cy="20" r="20" fill="#ecdfe0" />
    <path fill="#2b1c46" d="M17 0C8 0 5 8 3 16c-1 10 4 18 11 22 3-4 2-9 0-14-3-9-1-15 4-18 8-1 11 8 9 17-2 6-3 11-1 15 8-4 12-11 11-20C36 8 29 0 17 0z" />
    <path fill="#f3d6cd" d="M19 5c-7 3-8 11-7 18 2 5 5 8 8 8s6-4 7-9c2-8-1-14-8-17z" />
    <path d="M14 16h4M22 16h4" stroke="#3a2740" strokeWidth="2" />
    <path d="M18 25h4" stroke="#c95a66" strokeWidth="2" />
  </svg>
);

const PanelIcon = () => (
  <Svg width="47" height="28" viewBox="0 0 47 28">
    <path d="M1 1h45v26H1zM46 5H33v22M18 10l4-3v14M38 22h4" />
  </Svg>
);

const WeatherIcon = () => (
  <svg width="53" height="60" viewBox="0 0 53 60">
    <circle cx="39" cy="34" r="13" fill="#f38a1e" />
    <path fill="#bccdf5" d="M12 56a11 11 0 0 1 0-21 15 15 0 0 1 29-2 12 12 0 0 1-1 23z" />
    <circle cx="38" cy="15" r="15" fill="#b91b22" />
    <text x="38" y="23" fontSize="22" fill="#fff" textAnchor="middle" fontFamily="Noto Sans">1</text>
  </svg>
);

const WindowsIcon = () => (
  <svg width="46" height="46" viewBox="0 0 46 46">
    <path fill="#5fdcf3" d="M0 0h22v22H0zM24 0h22v22H24z" />
    <path fill="#38b8f2" d="M0 24h22v22H0zM24 24h22v22H24z" />
  </svg>
);

const DesertArt = () => (
  <svg width="108" height="56" viewBox="0 0 108 56">
    <circle cx="64" cy="24" r="20" fill="#e68b9d" />
    <circle cx="57" cy="17" r="4" fill="#cf6d86" />
    <circle cx="70" cy="28" r="5" fill="#d6788e" />
    <path d="M14 42V26M22 44V16M28 36V24M22 34h6M92 26V10M86 26v-8M98 26v-8" stroke="#7a6bd0" strokeWidth="4" strokeLinecap="round" />
    <path fill="#6a46b4" d="M46 42c14-3 24-18 40-22 14-2 22 6 22 18S98 52 90 54H40z" />
    <path fill="#5236a0" d="M0 54c6-10 24-20 42-18 20 2 36 8 48 20H0z" />
  </svg>
);

const TaskViewIcon = () => (
  <svg width="48" height="46" viewBox="0 0 48 46">
    <rect x="13" y="0" width="35" height="33" fill="#eef0f1" />
    <rect x="0" y="13" width="36" height="33" fill="#8d8d8d" fillOpacity=".75" />
  </svg>
);

const FolderIcon = () => (
  <svg width="48" height="46" viewBox="0 0 48 46">
    <path fill="#d99c17" d="M0 2h16l5 6H0z" />
    <path fill="#fbd254" d="M0 9h17l4-4h27v40H0z" />
    <path fill="#1b7fcb" d="M8 46V36q0-5 5-5h22q5 0 5 5v10z" />
    <path stroke="#0d5b9c" strokeWidth="2" d="M15 38h18" />
  </svg>
);

const EdgeIcon = () => (
  <svg width="48" height="48" viewBox="0 0 48 48">
    <defs>
      <linearGradient id="edgeTop" x1="0" y1="0" x2="1" y2=".6">
        <stop offset="0" stopColor="#1b9de2" />
        <stop offset=".55" stopColor="#35c6c4" />
        <stop offset="1" stopColor="#6bdc50" />
      </linearGradient>
    </defs>
    <circle cx="24" cy="24" r="24" fill="#1363b5" />
    <path fill="url(#edgeTop)" d="M0 24a24 24 0 0 1 48-1c0 8-7 11-13 11-5 0-6-3-4-6 2-5-2-11-9-11C10 17 1 22 1 31A24 24 0 0 1 0 24z" />
    <path fill="#14282d" d="M48 23c0 8-7 11-13 11-5 0-6-3-4-6 1-4-2-8-6-8-5 3-5 17 8 19 5 1 9 0 14-4 2-4 2-8 1-12z" />
    <path fill="url(#edgeTop)" d="M30 10c9 4 12 14 4 23 7 1 14-2 14-10C47 14 40 8 30 10z" />
    <path fill="#1a7fd0" d="M0 26c3-9 14-12 22-8-9 6-9 20 3 29C10 48 1 38 0 26z" />
  </svg>
);

const WeChatIcon = () => (
  <svg width="48" height="42" viewBox="0 0 48 42">
    <path fill="#3bdc68" d="M18 0C8 0 0 7 0 15c0 5 3 9 7 12l-2 5 7-3c14 3 24-4 24-14C36 7 28 0 18 0z" />
    <path fill="#eef0f0" d="M34 14c-8 0-14 5-14 12 0 8 9 14 18 11l6 4-2-6c4-2 6-6 6-9 0-7-6-12-14-12z" />
    <g fill="#1d3a2c"><circle cx="12" cy="10" r="2" /><circle cx="24" cy="10" r="2" /></g>
    <g fill="#6d7274"><circle cx="29" cy="22" r="2" /><circle cx="39" cy="22" r="2" /></g>
  </svg>
);

const ChromeIcon = () => (
  <svg width="48" height="48" viewBox="0 0 48 48">
    <circle cx="24" cy="24" r="24" fill="#fcc31e" />
    <path fill="#d8332c" d="M3.200 12a24 24 0 0 1 41.600 0H24a12 12 0 0 0-11 17z" />
    <path fill="#2f9e48" d="M3.200 12l11 18a12 12 0 0 0 16 4l-7 14A24 24 0 0 1 3.200 12z" />
    <circle cx="24" cy="24" r="12" fill="#fff" />
    <circle cx="24" cy="24" r="9" fill="#3b78e7" />
  </svg>
);

const EnIcon = () => (
  <svg width="44" height="44" viewBox="0 0 44 44">
    <rect width="44" height="44" rx="7" fill="#fff" />
    <path fill="#4a21b5" d="M44 28v9q0 7-7 7h-7z" />
    <text x="22" y="29" fontSize="20" fontWeight="700" fill="#4a21d8" textAnchor="middle" fontFamily="Noto Sans">EN</text>
  </svg>
);

const TodoIcon = () => (
  <svg width="46" height="34" viewBox="0 0 46 34">
    <path fill="#2159c4" d="M0 15l8-8 18 18-8 9z" />
    <path fill="#53a8ee" d="M10 26L36 0l10 8-28 26z" />
  </svg>
);

const WpsIcon = () => (
  <svg width="48" height="38" viewBox="0 0 48 38">
    <path fill="#d91414" d="M0 0h26l-3 8H12l6 20-3 9z" />
    <path fill="#ee2417" d="M32 0h16L34 38h-4l-7-17 4-10 5 12 7-15h-9z" />
    <path fill="#ff6a2b" d="M24 0h9L19 38h-5z" />
  </svg>
);

const CloudTray = () => (
  <svg width="33" height="26" viewBox="0 0 33 26">
    <path fill="#9b9b9b" d="M7 25a7 7 0 0 1 0-15 10 10 0 0 1 18-2 8 8 0 0 1 1 17z" />
    <path fill="#fff" d="M7 26c-4-1-6-5-4-9l14-5c2-2 9-2 10 2 7 1 7 11 0 12z" />
  </svg>
);

const quick = ['save', 'exportFile', 'print', 'preview', 'more'];
const menus = ['开始', '插入', '页面布局', '公式', '数据', '审阅', '视图', '开发工具', '会员专享', '效率'];
const months = [1, 2, 3, 4, 5, 6, 7, 8, 9].map((n) => `${n}月份`);

const App = () => (
  <Page>
    <GlobalStyle />
    <TitleBar>
      <HomeTab>首页</HomeTab>
      <DocTab><DocerLogo />找稻壳模板</DocTab>
      <DocTab $active>
        <SheetLogo />任务打卡.xlsx
        <TabIcons><Icon name="screen" size={24} /><Icon name="close" size={24} /></TabIcons>
      </DocTab>
      <AddTab aria-label="新建"><Icon name="plus" size={28} stroke={4} /></AddTab>
      <TitleTools>
        <TitleTool $w={74} aria-label="窗口"><PanelIcon /></TitleTool>
        <TitleTool $w={57} aria-label="应用"><Icon name="apps" size={32} /></TitleTool>
        <TitleTool $w={70} aria-label="账号"><Avatar /></TitleTool>
        <Rule $gap={6} />
        <TitleTool $dim aria-label="最小化"><Icon name="minus" size={22} /></TitleTool>
        <TitleTool $dim aria-label="还原"><Icon name="restore" size={28} /></TitleTool>
        <TitleTool $dim aria-label="关闭"><Icon name="close" size={24} /></TitleTool>
      </TitleTools>
    </TitleBar>

    <MenuBar>
      <FileButton><Icon name="menu" size={31} />文件</FileButton>
      <Rule $gap={4} />
      {quick.map((q) => <QuickButton key={q} aria-label={q}><Icon name={q} size={34} /></QuickButton>)}
      <Rule />
      <MenuItems>
        {menus.map((m, i) => <MenuItem key={m} $active={i === 0}>{m}</MenuItem>)}
      </MenuItems>
      <SearchBox>
        <Icon name="search" size={28} />
        <input aria-label="搜索" placeholder="查找命令、搜索模板" />
      </SearchBox>
      <MenuRight>
        <TextButton><Icon name="cloud" size={32} />未上云</TextButton>
        <TextButton><Icon name="collab" size={28} />协作</TextButton>
        <ShareButton><Icon name="share" size={28} />分享</ShareButton>
        <Rule $gap={6} />
        <TextButton aria-label="更多">
          <svg width="16" height="26"><circle cx="8" cy="3" r="2" /><circle cx="8" cy="13" r="2" /><circle cx="8" cy="23" r="2" /></svg>
        </TextButton>
        <TextButton aria-label="收起"><Icon name="chevronUp" size={32} /></TextButton>
      </MenuRight>
    </MenuBar>

    <Ribbon>
      <Group $w={331} $pad={14}>
        <BigButton icon="paste" label="粘贴" w={90} muted />
        <Stack $w={130} $pad={10}>
          <LineButton><Icon name="cut" />剪切</LineButton>
          <LineButton><Icon name="copy" />复制<Arrow /></LineButton>
        </Stack>
        <BigButton icon="brush" label="格式刷" w={88} arrow={false} />
        <Launcher aria-label="剪贴板" />
      </Group>
      <Group $w={560} $pad={15}>
        <Stack>
          <Line>
            <FontPickers>
              <Select w={275} label="字体" value="宋体" />
              <Select w={124} label="字号" value="11" />
            </FontPickers>
            <ToolButton aria-label="增大字号"><Icon name="fontUp" size={34} /></ToolButton>
            <ToolButton aria-label="减小字号"><Icon name="fontDown" size={34} /></ToolButton>
          </Line>
          <Line>
            {['bold', 'italic', 'underline', 'strike'].map((n) => (
              <ToolButton key={n} aria-label={n}><Icon name={n} /></ToolButton>
            ))}
            {['border', 'cellStyle', 'fill', 'fontColor', 'eraser'].map((n) => (
              <ToolButton key={n} $w={68} $arrow aria-label={n}><Icon name={n} size={32} /><Arrow /></ToolButton>
            ))}
          </Line>
        </Stack>
        <Launcher aria-label="字体设置" />
      </Group>
      <Group $w={545} $pad={16}>
        <Stack>
          <Line $gap={4}>
            {['alignTop', 'alignMid', 'alignBottom', 'outdent', 'indent'].map((n) => (
              <ToolButton key={n} $w={46} $active={n === 'alignMid'} aria-label={n}><Icon name={n} /></ToolButton>
            ))}
          </Line>
          <Line $gap={4}>
            {['left', 'center', 'right', 'justify', 'distribute'].map((n) => (
              <ToolButton key={n} $w={46} aria-label={n}><Icon name={n} /></ToolButton>
            ))}
          </Line>
        </Stack>
        <BigButton icon="merge" label="合并居中" w={172} />
        <BigButton icon="wrap" label="自动换行" w={96} arrow={false} />
        <Launcher aria-label="对齐设置" />
      </Group>
      <Group $w={436} $pad={14}>
        <Stack $w={274}>
          <Select w={274} label="数字格式" value="常规" />
          <Line>
            <ToolButton $w={70} $arrow aria-label="货币"><Icon name="yen" /><Arrow /></ToolButton>
            <ToolButton $w={50} aria-label="百分比"><Icon name="percent" size={28} /></ToolButton>
            <ToolButton $w={50}>000<br />,</ToolButton>
            <ToolButton $w={50}>←.0<br />.00</ToolButton>
            <ToolButton $w={50}>.00<br />→.0</ToolButton>
          </Line>
        </Stack>
        <BigButton icon="convert" label="类型转换" w={138} />
        <Launcher aria-label="数字设置" />
      </Group>
      <Group $w={356} $pad={15}>
        <BigButton icon="condFormat" label="条件格式" w={124} />
        <Stack $pad={18}>
          <LineButton><Icon name="tableStyle" size={32} />表格样式<Arrow /></LineButton>
          <LineButton><Icon name="cellFormat" size={32} />单元格样式<Arrow /></LineButton>
        </Stack>
      </Group>
      <Group $w={376} $pad={7}>
        <BigButton icon="sum" label="求和" w={90} />
        <BigButton icon="filter" label="筛选" w={90} />
        <BigButton icon="sort" label="排序" w={90} />
        <BigButton icon="fillDown" label="填充" w={90} />
      </Group>
      <Group $pad={9}>
        <BigButton icon="cell" label="单元格" w={113} />
        <BigButton icon="rowCol" label="行和列" w={113} />
      </Group>
      <RibbonScroll>›</RibbonScroll>
    </Ribbon>

    <Main>
      <Work>
        <FormulaBar>
          <NameBox><input aria-label="名称框" defaultValue="AN11" /><Arrow /></NameBox>
          <FormulaIcons><Icon name="lookup" size={34} /><Fx>fx</Fx></FormulaIcons>
          <FormulaInput aria-label="编辑栏" />
        </FormulaBar>
        <SheetRow>
          <SheetView>
            <Sheet />
            <DaysChart />
            <HoursChart />
          </SheetView>
          <VScroll>
            <SplitGrip />
            <VTrack>
              <Triangle $dir="up" />
              <VThumb />
              <Triangle $dir="down" />
            </VTrack>
          </VScroll>
        </SheetRow>
        <TabStrip>
          <SheetNav>
            <NavButton disabled aria-label="首个"><Icon name="first" size={25} /></NavButton>
            <NavButton disabled aria-label="上一个"><Icon name="chevronLeft" size={25} /></NavButton>
            <NavButton aria-label="下一个"><Icon name="chevronRight" size={25} /></NavButton>
            <NavButton aria-label="末个"><Icon name="last" size={25} /></NavButton>
          </SheetNav>
          <SheetTab $active>统计</SheetTab>
          {months.map((m) => <SheetTab key={m}>{m}</SheetTab>)}
          <StripSpace $w={50} />
          <StripButton $w={48} aria-label="更多工作表">
            <svg width="26" height="6"><circle cx="3" cy="3" r="2" /><circle cx="13" cy="3" r="2" /><circle cx="23" cy="3" r="2" /></svg>
          </StripButton>
          <StripButton $w={50} aria-label="新建工作表"><Icon name="plus" size={28} /></StripButton>
          <StripSpace $w={28} />
          <DoubleRule />
          <HScroll>
            <Triangle $dir="left" />
            <HThumb />
            <Triangle $dir="right" />
          </HScroll>
          <DoubleRule />
          <StripSpace $w={45} />
        </TabStrip>
      </Work>
      <SideBar>
        <SideGrip />
        <SideButton aria-label="选择"><Icon name="pointer" size={34} /></SideButton>
        <SideButton $dim aria-label="属性"><Icon name="sliders" size={34} /></SideButton>
        <SideButton $dim aria-label="切换"><Icon name="swap" size={34} /></SideButton>
        <SideButton aria-label="模板"><Icon name="shop" size={34} /></SideButton>
        <SideButton aria-label="推荐"><Icon name="bulb" size={34} /></SideButton>
        <SideButton aria-label="帮助"><Icon name="book" size={34} /></SideButton>
        <SideButton aria-label="更多"><Icon name="dots" size={32} /></SideButton>
      </SideBar>
    </Main>

    <StatusBar>
      <Icon name="macro" size={34} />
      <StatusTools>
        <StatusButton $w={48} aria-label="护眼"><Icon name="eye" size={32} /></StatusButton>
        <StatusButton $w={66} aria-label="阅读"><Icon name="cross" size={32} /><Arrow /></StatusButton>
        <Rule $h={32} $gap={12} />
        <Views>
          <StatusButton $active aria-label="普通视图"><Icon name="gridView" size={34} /></StatusButton>
          <StatusButton aria-label="分页预览"><Icon name="pageView" size={34} /></StatusButton>
          <StatusButton aria-label="页面布局"><Icon name="splitView" size={34} /></StatusButton>
        </Views>
        <Rule $h={32} $gap={14} />
        <ZoomSelect>
          <select aria-label="缩放" defaultValue="100%"><option>100%</option></select>
          <Arrow />
        </ZoomSelect>
        <StatusButton $w={50} aria-label="缩小"><Icon name="minus" size={24} stroke={5} /></StatusButton>
        <ZoomRange type="range" min="0" max="100" defaultValue="49" aria-label="缩放比例" />
        <StatusButton aria-label="放大"><Icon name="plus" size={24} stroke={5} /></StatusButton>
        <StatusButton $w={56} aria-label="全屏"><Icon name="fullscreen" size={32} /></StatusButton>
      </StatusTools>
    </StatusBar>

    <TaskBar>
      <Weather><WeatherIcon /><span>12°C<small>多云</small></span></Weather>
      <TaskApps>
        <TaskApp $w={90} aria-label="Windows"><WindowsIcon /></TaskApp>
        <TaskSearch>
          <Icon name="search" size={30} stroke={3} />
          <input aria-label="搜索" placeholder="搜索" />
          <DesertArt />
        </TaskSearch>
        <TaskApp aria-label="任务视图"><TaskViewIcon /></TaskApp>
        <TaskApp $running aria-label="文件"><FolderIcon /></TaskApp>
        <TaskApp aria-label="Edge"><EdgeIcon /></TaskApp>
        <TaskApp aria-label="微信"><WeChatIcon /></TaskApp>
        <TaskApp aria-label="Chrome"><ChromeIcon /></TaskApp>
        <TaskApp aria-label="EN"><EnIcon /></TaskApp>
        <TaskApp><TodoIcon /><Badge>6</Badge></TaskApp>
        <TaskApp $running aria-label="WPS"><WpsIcon /></TaskApp>
      </TaskApps>
      <Tray>
        <TrayButton $w={80} aria-label="展开"><Icon name="chevronUp" size={24} stroke={3} /></TrayButton>
        <TrayButton $w={48} aria-label="云"><CloudTray /></TrayButton>
        <TrayButton $w={76}>中</TrayButton>
        <TrayButton $w={52} aria-label="网络"><Icon name="wifi" size={34} /></TrayButton>
        <TrayButton $w={48} aria-label="音量"><Icon name="sound" size={32} /></TrayButton>
        <TrayButton $w={48} aria-label="电池"><Icon name="battery" size={34} /></TrayButton>
        <Clock>17:47<br />2023/4/6</Clock>
      </Tray>
    </TaskBar>
  </Page>
);

export default App;
